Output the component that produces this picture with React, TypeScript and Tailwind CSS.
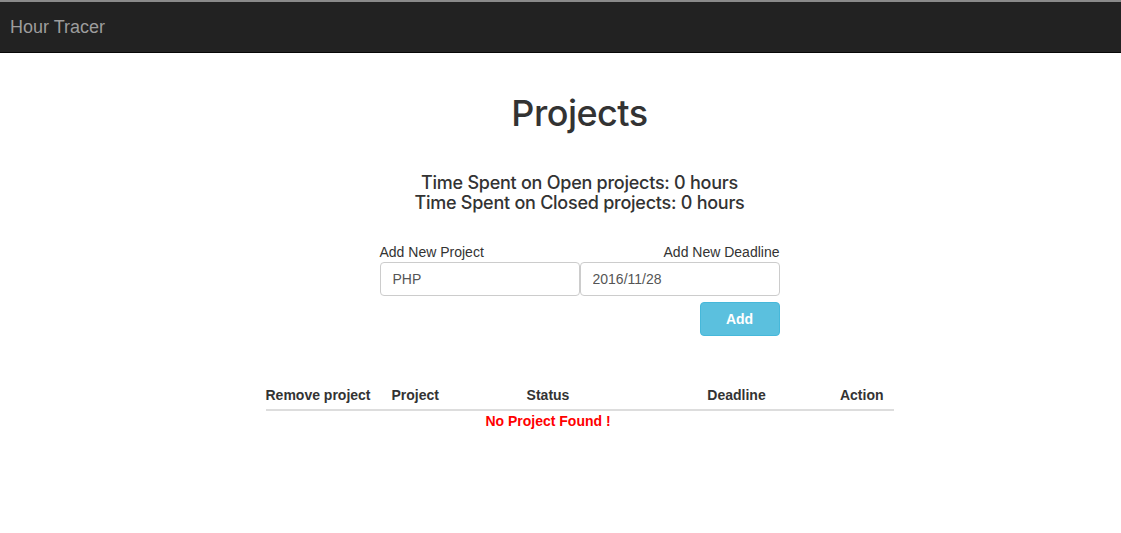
import React, { useState } from "react";

export default function App() {
  const [project, setProject] = useState("PHP");
  const [deadline, setDeadline] = useState("2016/11/28");

  return (
    <div className="min-h-screen overflow-hidden bg-white font-['Liberation_Sans',Arial,sans-serif] text-[14px] text-[#333]">
      <div className="h-[2px] bg-[#8a8a8a]" />
      <nav className="flex h-[51px] items-center border-b border-[#080808] bg-[#222] px-[10px]">
        <span className="text-[18px] text-[#9d9d9d]">Hour Tracer</span>
      </nav>

      <main className="flex flex-col items-center pl-[38px]">
        <h1 className="mt-[38px] font-['Inter',sans-serif] text-[36px] font-medium leading-[44px] tracking-[-0.5px] text-[#333]">
          Projects
        </h1>

        <div className="mt-[38px] text-center font-['Inter',sans-serif] text-[18px] font-medium leading-[20px] tracking-[-0.25px]">
          <p>Time Spent on Open projects: 0 hours</p>
          <p>Time Spent on Closed projects: 0 hours</p>
        </div>

        <div className="mt-[29px] w-[400px]">
          <div className="flex justify-between leading-[20px]">
            <label>Add New Project</label>
            <label>Add New Deadline</label>
          </div>
          <div className="flex">
            <input
              value={project}
              onChange={(e) => setProject(e.target.value)}
              className="h-[34px] w-[200px] rounded-[4px] border border-[#ccc] px-[12px] text-[14px] text-[#555] outline-none"
            />
            <input
              value={deadline}
              onChange={(e) => setDeadline(e.target.value)}
              className="h-[34px] w-[200px] rounded-[4px] border border-[#ccc] px-[12px] text-[14px] text-[#555] outline-none"
            />
          </div>
          <div className="mt-[6px] flex justify-end">
            <button className="h-[34px] w-[80px] rounded-[4px] border border-[#46b8da] bg-[#5bc0de] text-[14px] font-bold text-white">
              Add
            </button>
          </div>
        </div>

        <div className="mt-[49px] w-[628px]">
          <div className="grid grid-cols-[126px_68px_177px_200px_57px] border-b-2 border-[#ddd] pb-[4px] font-bold leading-[20px]">
            <span>Remove project</span>
            <span>Project</span>
            <span className="text-center">Status</span>
            <span className="text-center">Deadline</span>
            <span className="pr-[10px] text-right">Action</span>
          </div>
          <div className="grid grid-cols-[126px_68px_177px_200px_57px] leading-[20px]">
            <span className="col-start-3 whitespace-nowrap text-center font-bold text-[#ff0000]">
              No Project Found !
            </span>
          </div>
        </div>
      </main>
    </div>
  );
}
